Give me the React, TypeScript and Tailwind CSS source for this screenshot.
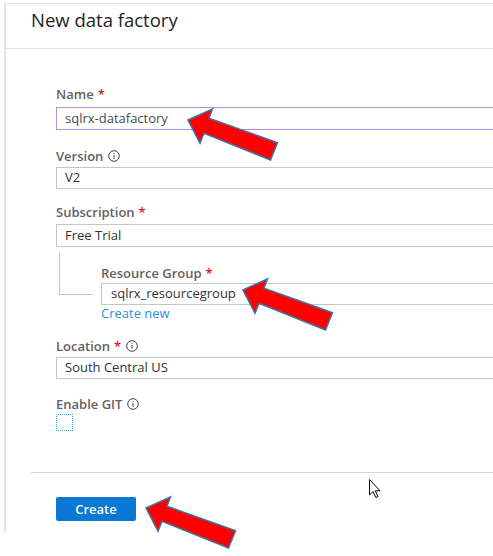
import React from "react";

// Small circled "i" used next to some labels
function InfoIcon() {
  return (
    <svg width="12" height="12" viewBox="0 0 12 12" className="ml-[5px] shrink-0">
      <circle cx="6" cy="6" r="5.3" fill="none" stroke="#444" strokeWidth="1" />
      <rect x="5.5" y="5" width="1" height="3.8" fill="#444" />
      <rect x="5.5" y="3" width="1" height="1" fill="#444" />
    </svg>
  );
}

interface LabelProps {
  text: string;
  required?: boolean;
  info?: boolean;
  starColor?: string;
}

function Label({ text, required, info, starColor = "text-[#e81123]" }: LabelProps) {
  return (
    <div className="flex items-center h-[18px] leading-[18px] text-[13px] font-semibold text-[#626262]">
      <span>{text}</span>
      {required && <span className={`ml-[4px] ${starColor}`}>*</span>}
      {info && <InfoIcon />}
    </div>
  );
}

function Field({ value, active, tall, pad = "pl-[8px]", color = "text-[#333]" }: { value: string; active?: boolean; tall?: boolean; pad?: string; color?: string }) {
  return (
    <div
      className={`w-[460px] ${tall ? "h-[23px]" : "h-[22px]"} border ${
        active ? "border-[#b98ad6]" : "border-[#c6c6c6]"
      } flex items-center ${pad} text-[13px] ${color}`}
    >
      {value}
    </div>
  );
}

// Red callout arrow; shape is relative to its tip
const ARROW = "0,0 24.5,-11 21,-1.7 89.5,22.7 82.5,40 16,13.3 12,23.3";

export default function App() {
  return (
    <div
      className="relative w-[493px] h-[556px] overflow-hidden bg-white"
      style={{ fontFamily: '"Open Sans", "Noto Sans", sans-serif' }}
    >
      <div className="ml-[4px] mt-[3px] h-[529px] border-l-2 border-t border-[#e4e4e4]">
        {/* Blade header */}
        <div className="h-[45px] border-b border-[#e4e4e4] pl-[25px] pt-[2px]">
          <h1 className="text-[18.5px] leading-[28px] text-[#1e1e1e]">New data factory</h1>
        </div>

        {/* Form body */}
        <div className="pl-[50px] pt-[36px]">
          <Label text="Name" required starColor="text-[#b0262c]" />
          <div className="mt-[4px]">
            <Field value="sqlrx-datafactory" active tall color="text-[#4a4a4a]" />
          </div>

          <div className="mt-[17px]">
            <Label text="Version" info />
          </div>
          <div className="mt-[2px]">
            <Field value="V2" />
          </div>

          <div className="mt-[14px]">
            <Label text="Subscription" required />
          </div>
          <div className="mt-[3px]">
            <Field value="Free Trial" tall />
          </div>

          {/* Nested resource group */}
          <div className="flex">
            <div className="ml-[3px] mt-[6px] h-[42px] w-[34px] shrink-0 border-l border-b border-[#c6c6c6]" />
            <div className="ml-[8px] pt-[17px]">
              <Label text="Resource Group" required />
              <div className="mt-[1px]">
                <Field value="sqlrx_resourcegroup" pad="pl-[9px]" />
              </div>
              <div className="text-[13px] leading-[16px] text-[#2f8fdc]">Create new</div>
            </div>
          </div>

          <div className="mt-[16px]">
            <Label text="Location" required info />
          </div>
          <div className="mt-[2px]">
            <Field value="South Central US" />
          </div>

          <div className="mt-[16px]">
            <Label text="Enable GIT" info />
          </div>
          <div className="mt-[1px] w-[17px] h-[17px] border border-dotted border-[#3fa0e0]" />
        </div>

        {/* Footer */}
        <div className="ml-[25px] mt-[41px] border-t border-[#d6d6d6]" />
        <div className="pl-[50px] pt-[23px]">
          <button className="w-[80px] h-[24px] rounded-[2px] bg-[#0a78d4] text-white text-[13px] font-semibold leading-[24px]">
            Create
          </button>
        </div>
      </div>

      {/* Overlays: callout arrows and mouse pointer */}
      <svg className="absolute left-0 top-0 pointer-events-none" width="493" height="556">
        {[
          [188, 120],
          [243, 290],
          [146, 508],
        ].map(([x, y], i) => (
          <polygon
            key={i}
            points={ARROW}
            transform={`translate(${x} ${y})`}
            fill="#ff0000"
            stroke="#41719c"
            strokeWidth="1.5"
            strokeLinejoin="miter"
          />
        ))}
        <path
          d="M369.5 479.5 L369.5 495 L373 491.5 L375.8 497.5 L378 496.5 L375.3 490.8 L380 490.8 Z"
          fill="#fff"
          stroke="#000"
          strokeWidth="1"
          strokeLinejoin="miter"
        />
      </svg>
    </div>
  );
}
